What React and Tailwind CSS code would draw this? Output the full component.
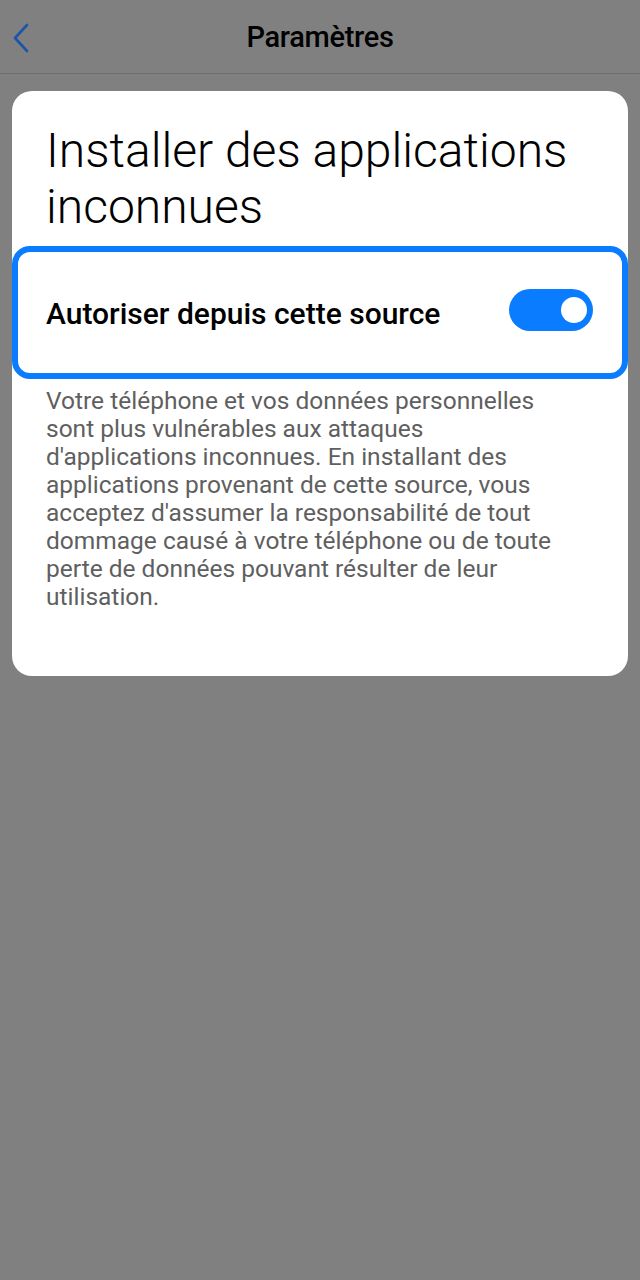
import React from 'react';

const lines = [
    "Votre téléphone et vos données personnelles",
    "sont plus vulnérables aux attaques",
    "d'applications inconnues. En installant des",
    "applications provenant de cette source, vous",
    "acceptez d'assumer la responsabilité de tout",
    "dommage causé à votre téléphone ou de toute",
    "perte de données pouvant résulter de leur",
    "utilisation.",
];

const App = () => {
    return (
        <div className="min-h-[1280px] w-[640px] bg-[#808080]" style={{ fontFamily: 'Roboto, "Noto Sans", sans-serif' }}>
            {/* Header */}
            <div className="relative flex h-[74px] items-center justify-center border-b border-[#6e6e6e]">
                <svg className="absolute left-[10px] top-[22px]" width="22" height="32" viewBox="0 0 22 32" fill="none">
                    <path d="M17 3 L5 16 L17 29" stroke="#1a56a8" strokeWidth="2.6" strokeLinecap="round" strokeLinejoin="round" />
                </svg>
                <h1 className="pt-[2px] text-[29px] font-medium tracking-[-0.3px] text-black">Paramètres</h1>
            </div>

            {/* Card */}
            <div className="mx-3 mt-[17px] rounded-[20px] bg-white pb-[65px]">
                <h2 className="px-[34px] pt-[32px] text-[48px] font-light leading-[56px] text-black">
                    Installer des applications inconnues
                </h2>

                <div className="mt-[11px] flex h-[133px] items-center justify-between rounded-[18px] border-[6px] border-[#0a7cff] pl-[28px] pr-[29px]">
                    <span className="pt-[1px] text-[30px] font-medium text-black">Autoriser depuis cette source</span>
                    <div className="mb-[6px] flex h-[42px] w-[84px] items-center justify-end rounded-full bg-[#0a7cff] pr-[6px]">
                        <div className="h-[26px] w-[26px] rounded-full bg-white" />
                    </div>
                </div>

                <p className="px-[34px] pt-[8px] text-[24.5px] leading-[28px] text-[#5f5f5f]">
                    {lines.map((line, i) => (
                        <span key={i} className="block whitespace-nowrap">{line}</span>
                    ))}
                </p>
            </div>
        </div>
    );
};

export default App;
